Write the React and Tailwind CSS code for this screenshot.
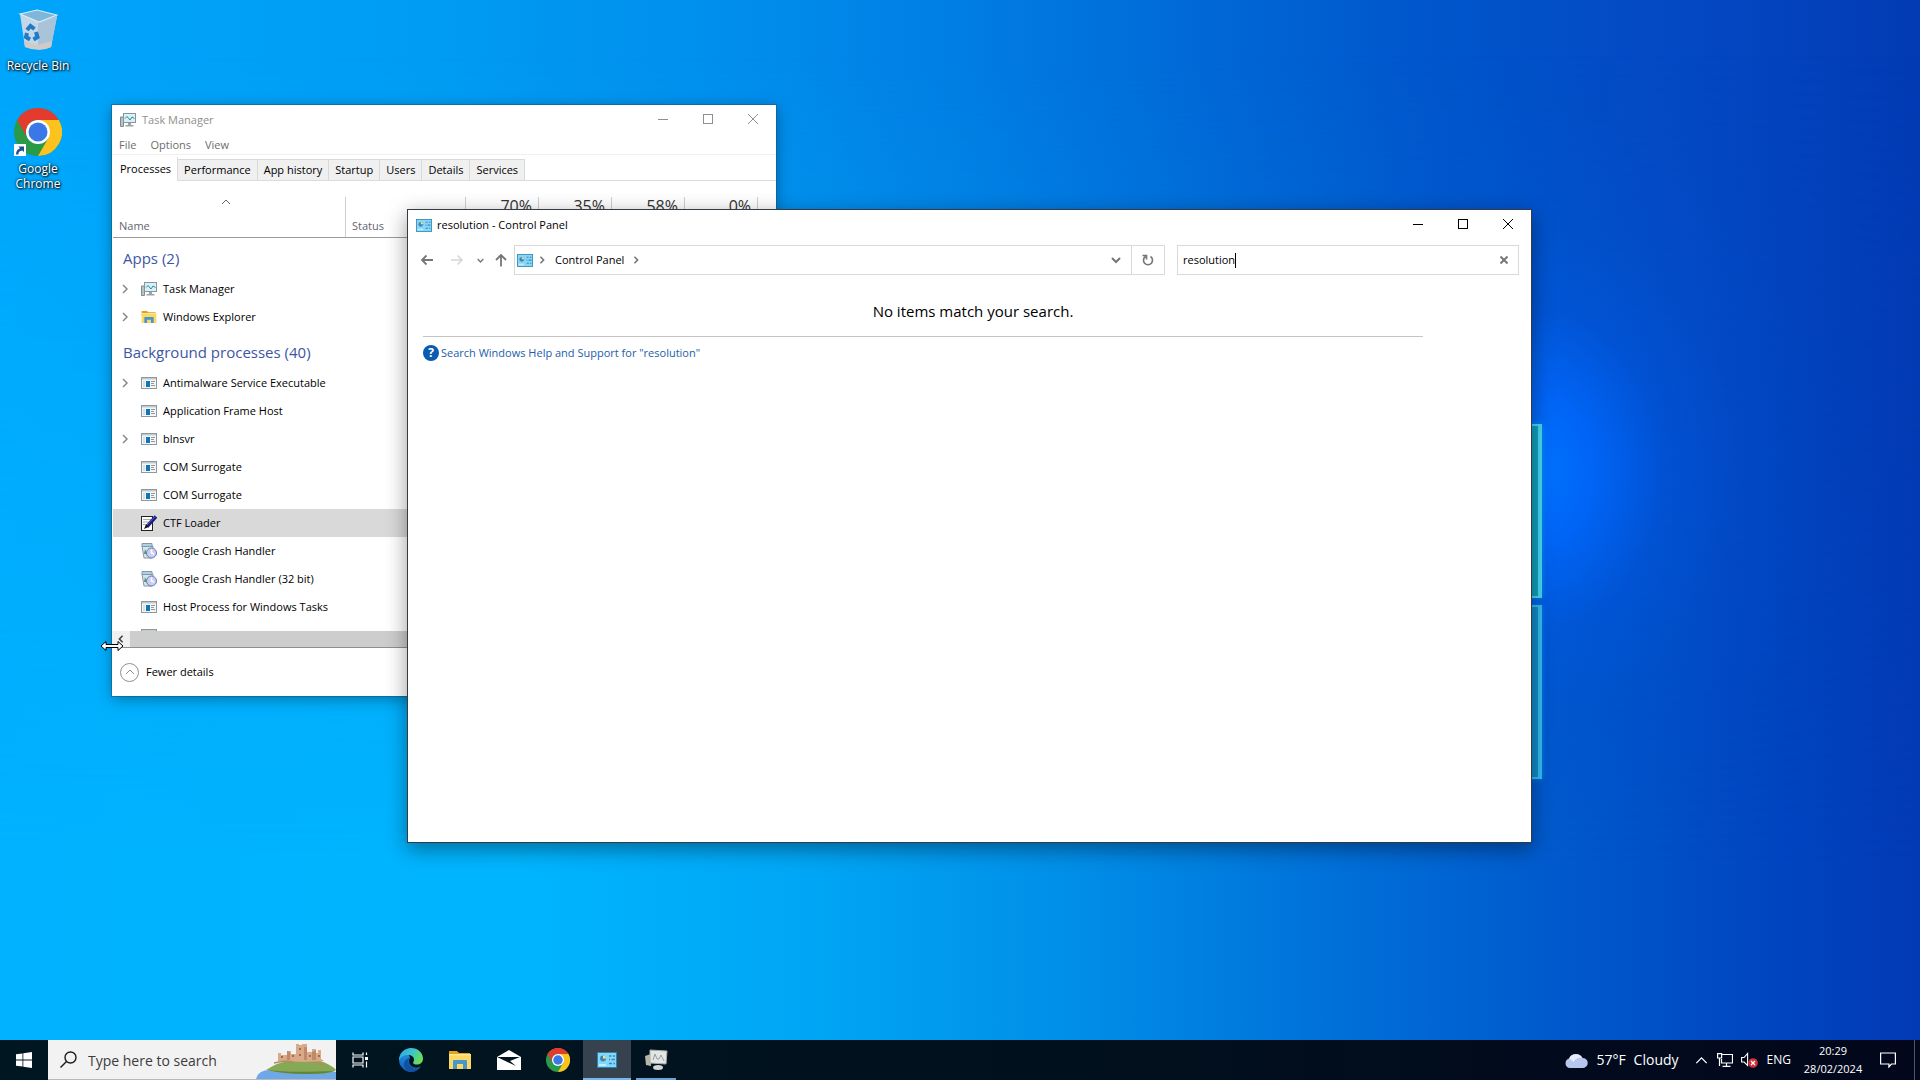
import { useState } from 'react';

const GROUPS = [
    {
        title: 'Apps (2)',
        rows: [
            { name: 'Task Manager', icon: 'monitor', expandable: true },
            { name: 'Windows Explorer', icon: 'folder', expandable: true },
        ],
    },
    {
        title: 'Background processes (40)',
        rows: [
            { name: 'Antimalware Service Executable', icon: 'exe', expandable: true },
            { name: 'Application Frame Host', icon: 'exe' },
            { name: 'blnsvr', icon: 'exe', expandable: true },
            { name: 'COM Surrogate', icon: 'exe' },
            { name: 'COM Surrogate', icon: 'exe' },
            { name: 'CTF Loader', icon: 'pen', selected: true },
            { name: 'Google Crash Handler', icon: 'crash' },
            { name: 'Google Crash Handler (32 bit)', icon: 'crash' },
            { name: 'Host Process for Windows Tasks', icon: 'exe' },
            { name: '', icon: 'exe' },
        ],
    },
];

const TABS = ['Performance', 'App history', 'Startup', 'Users', 'Details', 'Services'];
const USAGE = ['70%', '35%', '58%', '0%'];

/* ---------- icons ---------- */

function ChevronIcon({ dir = 'right', className = '', width = 1.5 }) {
    const d = {
        right: 'M3 1l4 4-4 4',
        left: 'M7 1L3 5l4 4',
        up: 'M1 7l4-4 4 4',
        down: 'M1 3l4 4 4-4',
    }[dir];
    return (
        <svg viewBox="0 0 10 10" className={className} fill="none" stroke="currentColor" strokeWidth={width}>
            <path d={d} />
        </svg>
    );
}

function MonitorIcon() {
    return (
        <svg viewBox="0 0 16 16" className="h-4 w-4">
            <path d="M0.5 5h3v9.5h-3z" fill="#b9c2c6" stroke="#7f8b91" />
            <rect x="3.5" y="1.5" width="12" height="9" fill="#d8f1f6" stroke="#8b9499" />
            <path d="M5 6.500l2-2 3 3.500 2-3 2.500 1.500" fill="none" stroke="#2b8aa0" />
            <path d="M8 11h3v2h2.500v1.500h-8V13H8z" fill="#9aa4a9" />
        </svg>
    );
}

function FolderIcon({ className = 'h-4 w-4' }) {
    return (
        <svg viewBox="0 0 24 22" className={className}>
            <path d="M1 2h8l2 2h11v5H1z" fill="#e3a21a" />
            <path d="M1 5h22v15H1z" fill="#fbd766" />
            <path d="M1 5h22v1.500H1z" fill="#fde491" />
            <path d="M5 20v-8q0-1 1-1h12q1 0 1 1v8h-4v-5H9v5z" fill="#4a96c8" />
        </svg>
    );
}

function ExeIcon() {
    return (
        <svg viewBox="0 0 16 16" className="h-4 w-4">
            <rect x="0.5" y="2.5" width="15" height="11" fill="#f4f6f7" stroke="#8d979c" />
            <path d="M1 3h14v1.500H1z" fill="#c3cacd" />
            <path d="M5 6h4v6H5z" fill="#1274b8" />
            <path d="M2 6h2v6H2z" fill="#cfe3ec" />
            <path d="M10 6.500h4M10 8.500h3M10 10.500h4" stroke="#8d979c" />
        </svg>
    );
}

function PenIcon() {
    return (
        <svg viewBox="0 0 16 16" className="h-4 w-4">
            <rect x="0.5" y="1.5" width="11" height="14" fill="#fff" stroke="#222" />
            <path d="M2.500 4.500h7M2.500 7h6M2.500 9.500h4" stroke="#555" strokeDasharray="1 1" />
            <path d="M15 1.500L6 11.500" stroke="#1c1c7c" strokeWidth="3.5" />
            <path d="M14 1.500L6 10" stroke="#5a5ad0" />
            <path d="M5 9.500l2.500 2.500L3 14z" fill="#111" />
        </svg>
    );
}

function CrashIcon() {
    return (
        <svg viewBox="0 0 16 16" className="h-4 w-4">
            <path d="M1 3h11l-1 12H3z" fill="#dbe3ea" stroke="#8797a5" />
            <path d="M1 0.500h10v3H1z" fill="#a9d3ea" stroke="#8797a5" />
            <path d="M4 6l2 5H3z" fill="#3f9d78" />
            <circle cx="10.5" cy="10" r="5" fill="#c9cff0" stroke="#6c78b4" />
            <path d="M10.500 6.500V10l2.500 1" fill="none" stroke="#fff" strokeWidth="1.5" />
        </svg>
    );
}

function ControlPanelIcon({ className = 'h-[13px] w-4' }) {
    return (
        <svg viewBox="0 0 20 16" className={className}>
            <rect x="0.5" y="0.5" width="19" height="15" fill="#86d6f6" stroke="#2a83b3" />
            <path d="M2 12h7v2H2z" fill="#c6ecfb" />
            <circle cx="6" cy="6.5" r="3" fill="#3a86c4" />
            <path d="M6 6.500V3.500a3 3 0 0 1 3 3z" fill="#f3e37c" />
            <path d="M12 4h2.500M16 4h2M12 7.500h1M14.500 7.500h3.500M12 11.500h3M16.500 11.500H18" stroke="#3a86c4" strokeWidth="1.4" />
        </svg>
    );
}

function ChromeIcon({ className }) {
    return (
        <svg viewBox="0 0 48 48" className={className}>
            <circle cx="24" cy="24" r="24" fill="#2a9a48" />
            <path d="M24 12h20.800A24 24 0 0 1 24 48l10.400-18z" fill="#fcc31e" />
            <path d="M3.200 12A24 24 0 0 1 44.800 12H24a12 12 0 0 0-10.400 18z" fill="#e33b2e" />
            <circle cx="24" cy="24" r="12" fill="#fff" />
            <circle cx="24" cy="24" r="9.5" fill="#3b78e7" />
        </svg>
    );
}

function RecycleBinIcon() {
    return (
        <svg viewBox="0 0 40 44" className="h-11 w-10">
            <path d="M2 5l5 33q14 5 26 0l6-31-18 6z" fill="#c3d7e6" />
            <path d="M20 13l19-6-6 31q-6 3-13 3z" fill="#a9c4d8" />
            <path d="M6 32l1 6q14 5 26 0l1-6-14 4z" fill="#cfcbc6" />
            <path d="M2 5l17-4 20 5-18 7z" fill="#7fb6dc" stroke="#dcecf7" strokeWidth="1.2" />
            <g fill="none" stroke="#1f7ac8" strokeWidth="4">
                <path d="M9 21l3.500-4 4 3" />
                <path d="M18 23l1.500 5-4 2.500" />
                <path d="M12 30.500l-4-2.500 1-4" />
            </g>
        </svg>
    );
}

function EdgeIcon() {
    return (
        <svg viewBox="0 0 24 24" className="h-6 w-6">
            <defs>
                <linearGradient id="edge-top" x1="0" y1="0" x2="1" y2="0.4">
                    <stop offset="0" stopColor="#2aa7e6" />
                    <stop offset="0.6" stopColor="#3cc6c9" />
                    <stop offset="1" stopColor="#6bdc5a" />
                </linearGradient>
                <linearGradient id="edge-low" x1="0" y1="0" x2="0" y2="1">
                    <stop offset="0" stopColor="#1f8ee0" />
                    <stop offset="1" stopColor="#0f5cb4" />
                </linearGradient>
            </defs>
            <path d="M0 12a12 12 0 0 0 22 6.500q-4 2-8 0.500-4-2-4-6 0-2 1-3-1-5-6-4-5 1-5 6z" fill="url(#edge-low)" />
            <path d="M0 12A12 12 0 0 1 12 0c7 0 12 5 12 10.500 0 4-3 6-6 6-2.500 0-4-1-4-1.800 0-0.700 1-1 1-3C15 9 12.500 7 9 7q-6 0-9 5z" fill="url(#edge-top)" />
            <path d="M11 9.500q-3 4 0 8 3.500 4.500 9 3A12 12 0 0 1 12 24q-5-1-7-6-1-6 6-8.500z" fill="#13509e" />
        </svg>
    );
}

function MailIcon() {
    return (
        <svg viewBox="0 0 24 20" className="h-5 w-6">
            <path d="M0 7l12-7 12 7v13H0z" fill="#fff" />
            <path d="M0 7h23l-10 4 6 5z" fill="#02131d" />
        </svg>
    );
}

function TaskManagerTrayIcon() {
    return (
        <svg viewBox="0 0 24 22" className="h-[22px] w-6">
            <path d="M1 7l6-2v12l-5-1z" fill="#b9b4a8" />
            <path d="M6 1l17 1-1 13-16-1z" fill="#e3e6e3" stroke="#a8aba8" />
            <path d="M9 11l2-6 2 5h2l2-4 3 6" fill="none" stroke="#8fa0a8" />
            <ellipse cx="14" cy="18.5" rx="5" ry="2.5" fill="#d4d7d6" />
        </svg>
    );
}

function CastleIcon() {
    return (
        <svg viewBox="0 0 80 36" className="h-9 w-20">
            <path d="M0 36q2-9 14-9 30-4 66 2v7z" fill="#6fa8e8" />
            <path d="M10 27q12-8 26-10h26q14 5 18 10-4 4-28 4-26 0-42-4z" fill="#86a955" />
            <path d="M12 27q20 3 66 1-6 3-26 3-26 0-40-4z" fill="#5f8539" />
            <path d="M22 17v-7h3v2h6V8h4v3h5V1h3v1h3V1h5v8h5V6h4v4h2V7h3v9l3 2-20 1-26-1z" fill="#d9a988" />
            <path d="M48 4v13h3V4zM56 9v8h4V7zM31 8v9h3V9z" fill="#c08a6a" />
            <path d="M25 14h2M36 13h2M43 6h2M43 12h2M62 13h2M53 13h2" stroke="#8b5840" strokeWidth="1.5" />
            <path d="M18 20q10-3 20-1M58 20l12 2" stroke="#b98a66" strokeWidth="1.5" fill="none" />
        </svg>
    );
}

const PROCESS_ICONS = {
    monitor: MonitorIcon,
    folder: FolderIcon,
    exe: ExeIcon,
    pen: PenIcon,
    crash: CrashIcon,
};

/* ---------- windows ---------- */

function CaptionButtons() {
    return (
        <div className="flex h-7 self-start">
            <button aria-label="Minimize" className="flex w-[45px] items-center justify-center">
                <svg viewBox="0 0 10 10" className="h-[10px] w-[10px]" stroke="currentColor" shapeRendering="crispEdges">
                    <path d="M0 5.500h10" />
                </svg>
            </button>
            <button aria-label="Maximize" className="flex w-[45px] items-center justify-center">
                <svg viewBox="0 0 10 10" className="h-[10px] w-[10px]" fill="none" stroke="currentColor" shapeRendering="crispEdges">
                    <path d="M0.500 0.500h9v9h-9z" />
                </svg>
            </button>
            <button aria-label="Close" className="flex w-[46px] items-center justify-center">
                <svg viewBox="0 0 10 10" className="h-[10px] w-[10px]" stroke="currentColor">
                    <path d="M0 0l10 10M10 0L0 10" />
                </svg>
            </button>
        </div>
    );
}

function ProcessRow({ row }) {
    const Icon = PROCESS_ICONS[row.icon];
    return (
        <tr className={row.selected ? 'bg-[#d9d9d9]' : ''}>
            <td className="h-7 p-0" colSpan={7}>
                <div className="flex items-center pl-[7px]">
                    <span className="w-[21px] text-[#8a8a8a]">
                        {row.expandable && <ChevronIcon className="h-[10px] w-[10px]" />}
                    </span>
                    <Icon />
                    <span className="ml-[6px] whitespace-nowrap">{row.name}</span>
                </div>
            </td>
        </tr>
    );
}

function TaskManager() {
    return (
        <section className="absolute top-[105px] left-28 flex h-[591px] w-[664px] flex-col bg-white text-[11px] leading-4 text-black shadow-[0_0_0_1px_rgba(30,80,120,0.5),0_3px_14px_rgba(0,0,0,0.35)]">
            <header className="flex h-[30px] items-center pl-2 text-[#8f8f8f]">
                <MonitorIcon />
                <h1 className="ml-[6px] flex-1">Task Manager</h1>
                <CaptionButtons />
            </header>
            <nav className="flex h-5 items-center gap-[14px] border-b border-[#f0f0f0] pl-[7px] text-[#6d6d6d]">
                <button>File</button>
                <button>Options</button>
                <button>View</button>
            </nav>
            <div className="flex h-[26px] items-end border-b border-[#dcdcdc] pt-[2px]" role="tablist">
                <button role="tab" aria-selected="true" className="-mb-px h-6 border-r border-[#dcdcdc] bg-white pr-[6px] pb-px pl-2">
                    Processes
                </button>
                {TABS.map((tab) => (
                    <button key={tab} role="tab" aria-selected="false" className="h-[21px] border-t border-r border-[#d9d9d9] bg-[#f0f0f0] px-[6px]">
                        {tab}
                    </button>
                ))}
            </div>
            <div className="min-h-0 flex-1 overflow-hidden pl-px">
                <table className="w-full table-fixed border-collapse">
                    <colgroup>
                        <col className="w-[233px]" />
                        <col className="w-[120px]" />
                        <col className="w-[73px]" />
                        <col className="w-[73px]" />
                        <col className="w-[73px]" />
                        <col className="w-[73px]" />
                        <col />
                    </colgroup>
                    <thead>
                        <tr className="border-b border-[#9b9b9b] text-left text-[#5f6672]">
                            <th className="h-14 p-0 align-bottom font-normal">
                                <div className="flex h-10 flex-col justify-between border-r border-[#cfcfcf] pb-[3px] pl-[6px]">
                                    <ChevronIcon dir="up" className="ml-[102px] h-[10px] w-[10px]" width={1} />
                                    Name
                                </div>
                            </th>
                            <th className="p-0 align-bottom font-normal">
                                <div className="flex h-10 items-end border-r border-[#cfcfcf] pb-[3px] pl-[6px]">Status</div>
                            </th>
                            {USAGE.map((value) => (
                                <th key={value} className="p-0 text-right align-bottom font-normal">
                                    <div className="h-10 border-r border-[#cfcfcf] pr-[6px] text-[16px] leading-[18px] text-[#333]">{value}</div>
                                </th>
                            ))}
                            <th className="p-0" />
                        </tr>
                    </thead>
                    {GROUPS.map((group) => (
                        <tbody key={group.title}>
                            <tr>
                                <th colSpan={7} className="h-[38px] p-0 pt-1 pl-[10px] text-left text-[15px] font-normal text-[#3d55a5]">
                                    {group.title}
                                </th>
                            </tr>
                            {group.rows.map((row, i) => (
                                <ProcessRow key={i} row={row} />
                            ))}
                        </tbody>
                    ))}
                </table>
            </div>
            <div className="flex h-[17px] items-center border-b border-[#8f8f8f] bg-[#f0f0f0]">
                <button aria-label="Scroll left" className="flex w-[18px] justify-center text-[#444]">
                    <ChevronIcon dir="left" className="h-2 w-2" width={2} />
                </button>
                <div className="h-full flex-1 bg-[#cdcdcd]" />
            </div>
            <footer className="flex h-12 items-center pl-2">
                <button className="flex items-center gap-[7px]">
                    <span className="flex h-[19px] w-[19px] items-center justify-center rounded-full border border-[#8f8f8f] text-[#8f8f8f]">
                        <ChevronIcon dir="up" className="h-[10px] w-[10px]" width={1} />
                    </span>
                    Fewer details
                </button>
            </footer>
        </section>
    );
}

function ControlPanel() {
    const [query, setQuery] = useState('resolution');
    return (
        <section className="absolute top-[209px] left-[407px] flex h-[634px] w-[1125px] flex-col border border-[#333b45] bg-white text-[11px] leading-4 text-black shadow-[0_6px_20px_rgba(0,0,0,0.4)]">
            <header className="flex h-[30px] items-center pl-2">
                <ControlPanelIcon />
                <h1 className="ml-[5px] flex-1">resolution - Control Panel</h1>
                <CaptionButtons />
            </header>
            <div className="mt-[5px] flex h-[30px] px-3 text-[#767676]">
                <div className="flex w-[94px] items-center">
                    <button aria-label="Back">
                        <svg viewBox="0 0 14 14" className="h-[14px] w-[14px]" fill="none" stroke="currentColor" strokeWidth="1.8">
                            <path d="M13 7H2M6.500 2.500L2 7l4.500 4.500" />
                        </svg>
                    </button>
                    <button aria-label="Forward" className="ml-4 text-[#d6d6d6]">
                        <svg viewBox="0 0 14 14" className="h-[14px] w-[14px]" fill="none" stroke="currentColor" strokeWidth="1.5">
                            <path d="M1 7h11M7.500 2.500L12 7l-4.500 4.500" />
                        </svg>
                    </button>
                    <button aria-label="Recent locations" className="ml-[13px]">
                        <ChevronIcon dir="down" className="h-[7px] w-[7px]" width={2} />
                    </button>
                    <button aria-label="Up" className="ml-[10px]">
                        <svg viewBox="0 0 14 14" className="h-[14px] w-[14px]" fill="none" stroke="currentColor" strokeWidth="1.8">
                            <path d="M7 13.500V2M2 7l5-5 5 5" />
                        </svg>
                    </button>
                </div>
                <div className="flex flex-1 items-center border border-[#d9d9d9] pl-[2px]">
                    <ControlPanelIcon />
                    <ChevronIcon className="mx-[5px] h-2 w-2" width={2} />
                    <button className="ml-1 text-black">Control Panel</button>
                    <ChevronIcon className="ml-2 h-2 w-2" width={2} />
                    <button aria-label="Previous locations" className="mr-[10px] ml-auto">
                        <ChevronIcon dir="down" className="h-[10px] w-[10px]" width={2} />
                    </button>
                </div>
                <button aria-label="Refresh" className="flex w-[33px] items-center justify-center border-y border-r border-[#d9d9d9]">
                    <svg viewBox="0 0 12 12" className="h-3 w-3" fill="none" stroke="currentColor" strokeWidth="1.6">
                        <path d="M8.500 2.500A4.500 4.500 0 1 1 3.500 2.500M0.500 1.500h4v4" />
                    </svg>
                </button>
                <div className="ml-3 flex w-[342px] items-center border border-[#d9d9d9] pl-[5px]">
                    <input
                        aria-label="Search Control Panel"
                        value={query}
                        onChange={(e) => setQuery(e.target.value)}
                        className="field-sizing-content text-black outline-none"
                    />
                    <span className="h-[15px] w-px bg-black" />
                    <button aria-label="Clear search" className="mr-[10px] ml-auto">
                        <svg viewBox="0 0 8 8" className="h-2 w-2" stroke="currentColor" strokeWidth="2">
                            <path d="M0.500 0.500l7 7M7.500 0.500l-7 7" />
                        </svg>
                    </button>
                </div>
            </div>
            <main className="pt-6 pr-2 pl-[15px]">
                <p className="text-center text-[15px] leading-6">No items match your search.</p>
                <hr className="mt-[13px] mr-[100px] border-[#c4c4c4]" />
                <a href="#help" className="mt-2 flex w-fit items-center text-[#1c5ea8]">
                    <span className="flex h-4 w-4 items-center justify-center rounded-full bg-[#0a5cb0] text-[12px] font-bold text-white">?</span>
                    <span className="ml-[2px]">Search Windows Help and Support for "resolution"</span>
                </a>
            </main>
        </section>
    );
}

/* ---------- desktop ---------- */

function Wallpaper() {
    return (
        <div className="absolute inset-0 overflow-hidden bg-[linear-gradient(90deg,#00a6fc_0%,#009cf3_22%,#008ceb_40%,#007ce2_51%,#0068d6_63%,#0055cb_75%,#0448c3_88%,#023bb4_100%)]">
            <div className="absolute inset-0 bg-[linear-gradient(90deg,#00b2ff_0%,#00b5fe_27%,#00a6f5_42%,#008ee8_56%,#006fd8_70%,#0056ca_83%,#0044bf_93%,#023ab4_100%)] mask-t-from-20% mask-t-to-95%" />
            <div className="absolute inset-0 bg-[radial-gradient(ellipse_300px_360px_at_1530px_470px,rgba(0,116,255,1)_0%,rgba(0,104,255,0.85)_20%,rgba(0,88,230,0.4)_45%,rgba(0,80,215,0.15)_70%,transparent_100%)]" />
            <div className="absolute top-[424px] left-[1400px] h-[174px] w-[142px] border-2 border-r-4 border-[#48d8f0] bg-[#12a0c0] shadow-[0_0_5px_rgba(0,160,255,0.8)]" />
            <div className="absolute top-[605px] left-[1400px] h-[174px] w-[142px] border-2 border-r-4 border-[#34bdf0] bg-[#128cc8] shadow-[0_0_5px_rgba(0,140,255,0.8)]" />
        </div>
    );
}

function DesktopIcon({ label, children }) {
    return (
        <button className="flex w-[76px] flex-col items-center text-center text-[12px] leading-[15px] text-white [text-shadow:1px_1px_2px_#000,0_0_3px_#000]">
            {children}
            <span className="mt-[5px] w-16">{label}</span>
        </button>
    );
}

function ResizeCursor() {
    return (
        <svg viewBox="0 0 24 12" className="absolute top-[640px] left-[100px] h-3 w-6" fill="#fff" stroke="#000">
            <path d="M1 6l5-4.500v3h12v-3L23 6l-5 4.500v-3H6v3z" />
        </svg>
    );
}

function TaskbarButton({ label, className = '', children }) {
    return (
        <button aria-label={label} className={`flex w-12 items-center justify-center ${className}`}>
            {children}
        </button>
    );
}

function Taskbar() {
    return (
        <footer className="relative flex h-10 bg-linear-to-r from-[#001722] via-[#01111d] to-[#02071c] text-white">
            <TaskbarButton label="Start">
                <svg viewBox="0 0 16 16" className="h-4 w-4" fill="#fff">
                    <path d="M0 2.300l6.500-0.900v6.200H0zM7.300 1.300L16 0v7.600H7.300zM0 8.400h6.500v6.200L0 13.700zM7.300 8.400H16V16l-8.700-1.300z" />
                </svg>
            </TaskbarButton>
            <label className="flex w-72 items-center border-b border-[#b8b8b8] bg-[#f2f2f2] pl-3 text-[#3c3c3c]">
                <svg viewBox="0 0 17 17" className="h-[17px] w-[17px]" fill="none" stroke="#1d1d1d" strokeWidth="1.4">
                    <circle cx="10.5" cy="6.5" r="5.5" />
                    <path d="M6.500 10.500l-6 6" />
                </svg>
                <input
                    aria-label="Type here to search"
                    placeholder="Type here to search"
                    className="ml-[11px] w-0 flex-1 pt-px text-[14px] outline-none placeholder:text-[#3c3c3c]"
                />
                <span className="self-end">
                    <CastleIcon />
                </span>
            </label>
            <TaskbarButton label="Task View">
                <svg viewBox="0 0 17 16" className="h-4 w-[17px]" fill="none" stroke="#fff" strokeWidth="1.2">
                    <path d="M1 0.500v2.500h10V0.500M1 15.500V13h10v2.500M1 5h10v6H1zM14.500 0.500V3M14.500 9.500v6" />
                    <path d="M13 5h3v3h-3z" fill="#fff" stroke="none" />
                </svg>
            </TaskbarButton>
            <div className="ml-[3px] flex gap-px">
                <TaskbarButton label="Microsoft Edge">
                    <EdgeIcon />
                </TaskbarButton>
                <TaskbarButton label="File Explorer">
                    <FolderIcon className="h-[22px] w-6" />
                </TaskbarButton>
                <TaskbarButton label="Mail">
                    <MailIcon />
                </TaskbarButton>
                <TaskbarButton label="Google Chrome">
                    <ChromeIcon className="h-6 w-6" />
                </TaskbarButton>
                <TaskbarButton label="Control Panel" className="border-y-2 border-t-transparent border-b-[#76b9ed] bg-[#36424d]">
                    <ControlPanelIcon className="h-4 w-5" />
                </TaskbarButton>
                <div className="flex px-1">
                    <button aria-label="Task Manager" className="flex w-10 items-center justify-center border-y-2 border-t-transparent border-b-[#6fa3d8]">
                        <TaskManagerTrayIcon />
                    </button>
                </div>
            </div>

            <div className="ml-auto flex items-center text-[11px] leading-4">
                <button className="flex items-center text-[14px]">
                    <svg viewBox="0 0 24 16" className="h-4 w-6">
                        <path d="M5 16a5 5 0 0 1 0-9.500A7.500 7.500 0 0 1 18.500 6 5 5 0 0 1 19 16z" fill="#b7c6ec" />
                        <path d="M5 7a7.500 7.500 0 0 1 13.500-1q-6-1-9 4-2-3-4.500-3z" fill="#e6ecfb" />
                    </svg>
                    <span className="ml-2">57°F</span>
                    <span className="ml-2">Cloudy</span>
                </button>
                <button aria-label="Show hidden icons" className="ml-4">
                    <ChevronIcon dir="up" className="h-[13px] w-[13px]" width={1} />
                </button>
                <button aria-label="Network" className="ml-[9px]">
                    <svg viewBox="0 0 16 14" className="h-[14px] w-4" fill="none" stroke="#fff" strokeWidth="1.2">
                        <path d="M5 1.500h10.500V10H4.500V6M9.500 10v3M5.500 13.400h8" />
                        <path d="M0.600 0.600h4V5h-4zM2.500 5v8" />
                    </svg>
                </button>
                <button aria-label="Volume muted" className="ml-2">
                    <svg viewBox="0 0 17 16" className="h-4 w-[17px]">
                        <path d="M0.600 5.500h2.500l3.500-4v12l-3.500-3.500H0.600z" fill="none" stroke="#fff" strokeWidth="1.1" />
                        <circle cx="12" cy="11" r="4.8" fill="#d3313c" />
                        <path d="M10 9l4 4M14 9l-4 4" stroke="#fff" strokeWidth="1.2" />
                    </svg>
                </button>
                <button className="ml-[9px] text-[12px]">ENG</button>
                <button className="ml-3 flex w-[60px] flex-col items-center gap-[2px]">
                    <span>20:29</span>
                    <span>28/02/2024</span>
                </button>
                <button aria-label="Notifications" className="ml-[17px]">
                    <svg viewBox="0 0 16 16" className="h-4 w-4" fill="none" stroke="#fff" strokeWidth="1.2">
                        <path d="M0.600 1h14.800v11h-4l-2.500 3v-3H0.600z" />
                    </svg>
                </button>
                <button aria-label="Show desktop" className="ml-[18px] h-10 w-[6px] border-l border-[#4a5568]" />
            </div>
        </footer>
    );
}

export default function App() {
    return (
        <div className="relative flex h-screen flex-col overflow-hidden font-['Open_Sans','Noto_Sans',sans-serif]">
            <Wallpaper />
            <div className="relative flex-1">
                <div className="flex w-[76px] flex-col gap-[35px] pt-[9px]">
                    <DesktopIcon label="Recycle Bin">
                        <RecycleBinIcon />
                    </DesktopIcon>
                    <DesktopIcon label="Google Chrome">
                        <span className="relative">
                            <ChromeIcon className="h-12 w-12" />
                            <svg viewBox="0 0 12 12" className="absolute bottom-0 left-0 h-3 w-3">
                                <path d="M0 0h12v12H0z" fill="#fff" />
                                <path d="M2 10.500q0-5 4-6L4.500 2.500H10V8L8.300 6.500Q4 7 4.500 10.500z" fill="#1d5291" />
                            </svg>
                        </span>
                    </DesktopIcon>
                </div>
                <TaskManager />
                <ControlPanel />
                <ResizeCursor />
            </div>
            <Taskbar />
        </div>
    );
}
